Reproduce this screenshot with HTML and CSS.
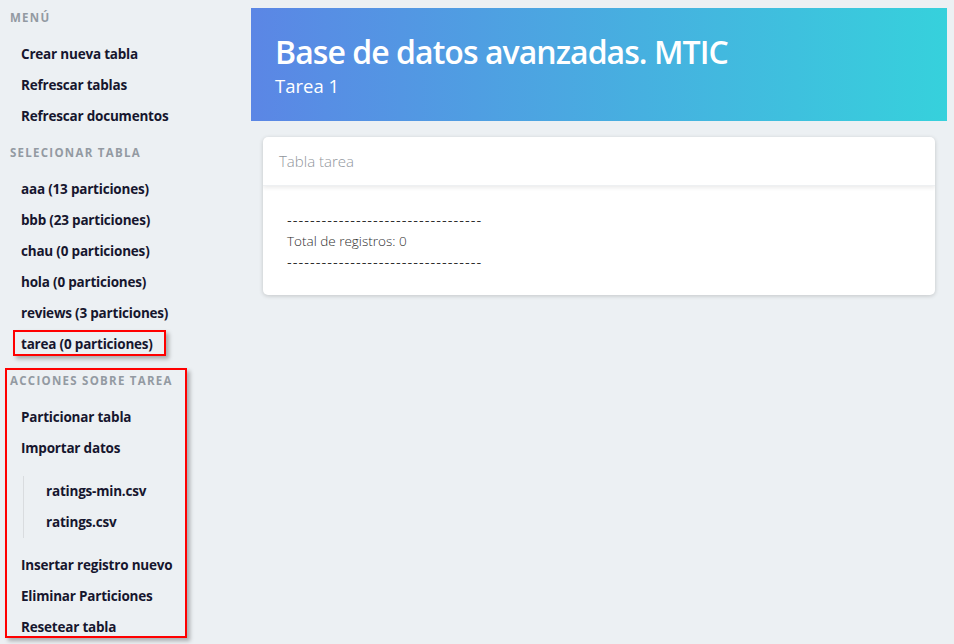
FILE: index.html
```html
<!DOCTYPE html>
<html lang="es">
<head>
<meta charset="utf-8">
<title>Base de datos avanzadas. MTIC</title>
<link rel="stylesheet" href="styles.css">
</head>
<body>
<div class="layout">
  <aside class="sidebar">
    <nav class="menu">
      <p class="menu-label first">Menú</p>
      <ul class="menu-list">
        <li><a>Crear nueva tabla</a></li>
        <li><a>Refrescar tablas</a></li>
        <li><a>Refrescar documentos</a></li>
      </ul>
      <p class="menu-label">Selecionar tabla</p>
      <ul class="menu-list">
        <li><a>aaa (13 particiones)</a></li>
        <li><a>bbb (23 particiones)</a></li>
        <li><a>chau (0 particiones)</a></li>
        <li><a>hola (0 particiones)</a></li>
        <li><a>reviews (3 particiones)</a></li>
        <li><a class="marked-item">tarea (0 particiones)</a></li>
      </ul>
      <div class="marked-section">
        <p class="menu-label">Acciones sobre tarea</p>
        <ul class="menu-list">
          <li><a>Particionar tabla</a></li>
          <li><a>Importar datos</a>
            <ul class="sub-list">
              <li><a>ratings-min.csv</a></li>
              <li><a>ratings.csv</a></li>
            </ul>
          </li>
          <li><a>Insertar registro nuevo</a></li>
          <li><a>Eliminar Particiones</a></li>
          <li><a>Resetear tabla</a></li>
        </ul>
      </div>
    </nav>
  </aside>
  <main class="main">
    <section class="hero">
      <h1 class="title">Base de datos avanzadas. MTIC</h1>
      <h2 class="subtitle">Tarea 1</h2>
    </section>
    <div class="content">
      <div class="card">
        <header class="card-header">
          <p class="card-header-title">Tabla tarea</p>
        </header>
        <div class="card-content">
          <p class="rule">----------------------------------</p>
          <p>Total de registros: 0</p>
          <p class="rule">----------------------------------</p>
        </div>
      </div>
    </div>
  </main>
</div>
</body>
</html>
```
FILE: styles.css
```css
* { box-sizing: border-box; }
html, body { margin: 0; padding: 0; }
body {
  background: #ecf0f3;
  font-family: "Open Sans", "Noto Sans", sans-serif;
  font-size: 14px;
  line-height: 1.5;
  color: #4a4a4a;
  height: 644px;
  overflow: hidden;
}
.layout {
  display: flex;
  padding: 8px 7px 0 0;
}
.sidebar {
  width: 251px;
  flex: none;
  padding-left: 10px;
}
.menu-label {
  margin: 12.5px 0;
  font-size: 11.5px;
  font-weight: 700;
  letter-spacing: 0.11em;
  text-transform: uppercase;
  color: #939aa2;
  line-height: 17px;
}
.menu-label.first { margin-top: 1px; }
.menu-list {
  list-style: none;
  margin: 0;
  padding: 0;
}
.menu-list a {
  display: inline-block;
  padding: 7px 11px;
  line-height: 17px;
  font-size: 13.5px;
  font-weight: 700;
  color: #16162e;
  letter-spacing: -0.2px;
}
.sub-list {
  list-style: none;
  margin: 12px 0 12px 13px;
  padding-left: 11px;
  border-left: 1px solid #d9dcdf;
}
.marked-item { position: relative; }
.marked-item::after {
  content: "";
  position: absolute;
  left: 3px; right: -2px; top: 1.5px; bottom: 3.5px;
  border: 2px solid #f00;
  box-shadow: 3px 3px 4px rgba(0, 0, 0, 0.28);
}
.marked-section { position: relative; }
.marked-section::after {
  content: "";
  position: absolute;
  left: -5px; top: -4px; width: 178px; bottom: 4.5px;
  border: 2px solid #f00;
  box-shadow: 3px 3px 4px rgba(0, 0, 0, 0.28);
}
.main {
  flex: 1;
  min-width: 0;
}
.hero {
  background: linear-gradient(to right, #5b86e5, #36d1dc);
  padding: 26px 24px 23px;
  color: #fff;
  height: 113px;
}
.title {
  margin: 0;
  font-size: 32px;
  font-weight: 600;
  line-height: 1.1;
  letter-spacing: -0.95px;
}
.subtitle {
  margin: 5px 0 0;
  font-size: 18.5px;
  font-weight: 400;
  line-height: 1.25;
}
.content {
  padding: 16px 12px;
}
.card {
  background: #fff;
  border-radius: 5px;
  box-shadow: 0 1px 4px rgba(10, 10, 10, 0.18);
  overflow: hidden;
}
.card-header {
  box-shadow: 0 2px 4px rgba(10, 10, 10, 0.08);
  border-bottom: 1px solid #eef0f2;
}
.card-header-title {
  margin: 0;
  padding: 14px 16px 13px;
  font-size: 15px;
  font-weight: 300;
  color: #8f959b;
  line-height: 21px;
}
.card-content {
  padding: 24px 24px 22px;
  font-size: 13.5px;
  font-weight: 300;
  color: #2e2e2e;
}
.card-content p {
  margin: 0;
  line-height: 21px;
}
.card-content .rule {
  font-family: "DejaVu Sans", sans-serif;
  font-size: 13px;
  font-weight: 400;
  letter-spacing: 1.05px;
}
```
